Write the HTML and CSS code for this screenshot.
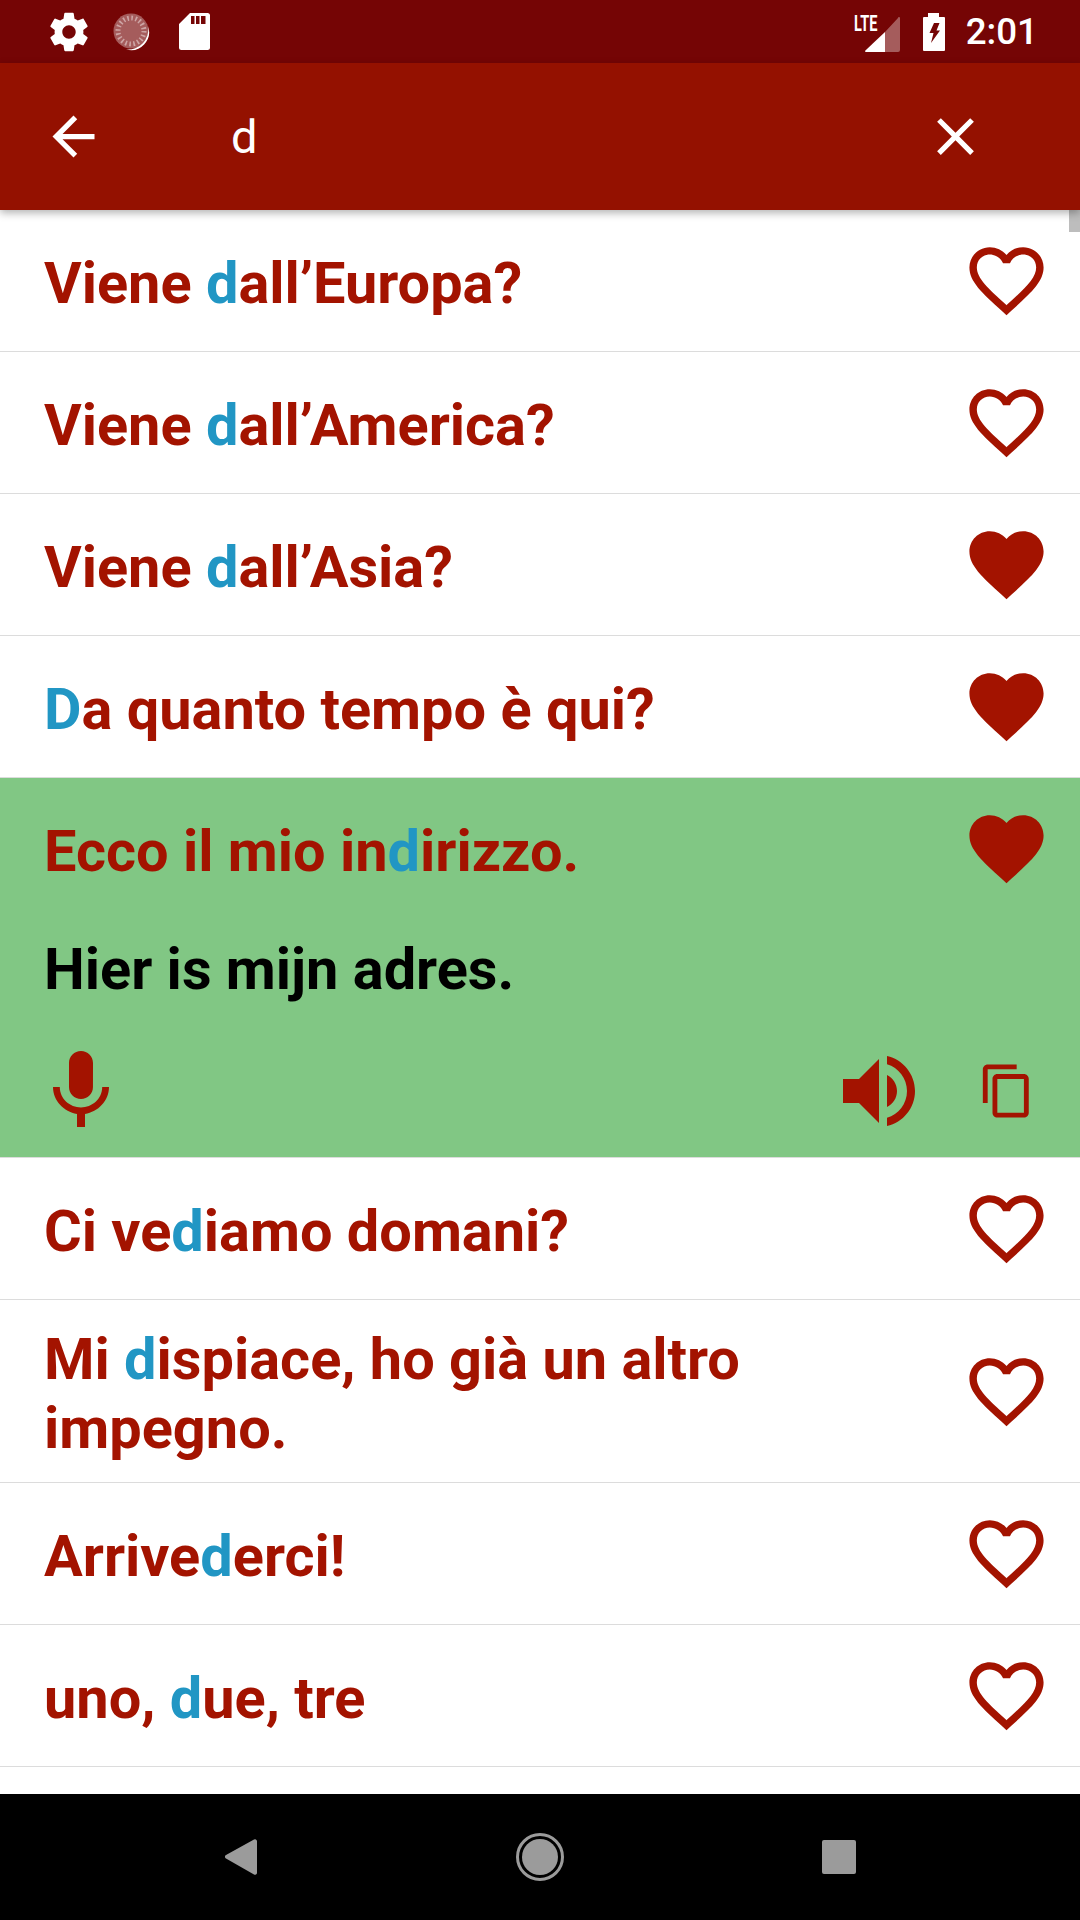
FILE: index.html
```html
<!DOCTYPE html>
<html lang="it">
<head>
  <meta charset="UTF-8">
  <meta name="viewport" content="width=device-width, initial-scale=1.0">
  <title>Search phrases</title>
  <link rel="stylesheet" href="styles.css">
</head>
<body>
  <!-- Shared icons -->
  <svg class="defs" width="0" height="0">
    <symbol id="heart-line" viewBox="0 0 24 24"><path d="M16.5 3c-1.74 0-3.41.81-4.5 2.09C10.91 3.81 9.24 3 7.5 3 4.42 3 2 5.42 2 8.5c0 3.78 3.4 6.86 8.55 11.54L12 21.35l1.45-1.32C18.6 15.36 22 12.28 22 8.5 22 5.42 19.58 3 16.5 3zm-4.4 15.55l-.1.1-.1-.1C7.14 14.24 4 11.39 4 8.5 4 6.5 5.5 5 7.5 5c1.54 0 3.04.99 3.57 2.36h1.87C13.46 5.99 14.96 5 16.5 5c2 0 3.5 1.5 3.5 3.5 0 2.89-3.14 5.74-7.9 10.05z"/></symbol>
    <symbol id="heart-full" viewBox="0 0 24 24"><path d="M12 21.35l-1.45-1.32C5.4 15.36 2 12.28 2 8.5 2 5.42 4.42 3 7.5 3c1.74 0 3.41.81 4.5 2.09C13.09 3.81 14.76 3 16.5 3 19.58 3 22 5.42 22 8.5c0 3.78-3.4 6.86-8.55 11.54L12 21.35z"/></symbol>
  </svg>

  <div class="screen">
    <div class="status-bar">
      <div class="status-left">
        <svg class="ic-gear" viewBox="0 0 24 24"><path d="M19.43 12.98c.04-.32.07-.64.07-.98s-.03-.66-.07-.98l2.11-1.65c.19-.15.24-.42.12-.64l-2-3.46c-.12-.22-.39-.3-.61-.22l-2.49 1c-.52-.4-1.08-.73-1.69-.98l-.38-2.65C14.46 2.18 14.25 2 14 2h-4c-.25 0-.46.18-.49.42l-.38 2.65c-.61.25-1.17.59-1.69.98l-2.49-1c-.23-.09-.49 0-.61.22l-2 3.46c-.13.22-.07.49.12.64l2.11 1.65c-.04.32-.07.65-.07.98s.03.66.07.98l-2.11 1.65c-.19.15-.24.42-.12.64l2 3.46c.12.22.39.3.61.22l2.49-1c.52.4 1.08.73 1.69.98l.38 2.65c.03.24.24.42.49.42h4c.25 0 .46-.18.49-.42l.38-2.65c.61-.25 1.17-.59 1.69-.98l2.49 1c.23.09.49 0 .61-.22l2-3.46c.12-.22.07-.49-.12-.64l-2.11-1.65zM12 15.5c-1.93 0-3.5-1.57-3.5-3.5s1.57-3.5 3.5-3.5 3.5 1.57 3.5 3.5-1.57 3.5-3.5 3.5z"/></svg>
        <svg class="ic-dial" viewBox="0 0 38 38">
          <circle cx="18" cy="18" r="17.500" fill="#fff" fill-opacity=".35"/>
          <path d="M35 13A18 18 0 0 1 13 36.300A20 20 0 0 0 35 13z"/>
          <circle cx="18" cy="18" r="13" fill="none" stroke="#fff" stroke-opacity=".45" stroke-width="5" stroke-dasharray="1.600 2.480"/>
        </svg>
        <svg class="ic-sd" viewBox="0 0 31 37"><path fill-rule="evenodd" d="M11 0h17.500a2.500 2.500 0 0 1 2.500 2.500v32a2.500 2.500 0 0 1-2.500 2.500h-26a2.500 2.500 0 0 1-2.500-2.500v-23.500zM12 3v8h3.500v-8zM17 3v8h3.500v-8zM22 3v8h4.500v-8z"/></svg>
      </div>
      <div class="status-right">
        <div class="signal">
          <span class="lte">LTE</span>
          <svg class="ic-signal" viewBox="0 0 35 35">
            <path fill-opacity=".35" d="M20 15l13-14a1 1 0 0 1 2 0v32a2 2 0 0 1-2 2h-13z"/>
            <path d="M20 15v20h-19c-1 0-1.300-.7-.6-1.400z"/>
          </svg>
        </div>
        <svg class="ic-battery" viewBox="0 0 22 38"><path fill-rule="evenodd" d="M5 0h11v4h5a1 1 0 0 1 1 1v32a1 1 0 0 1-1 1h-20a1 1 0 0 1-1-1v-32a1 1 0 0 1 1-1h4zM11 10l-4.500 10h4l-2.500 10 9-12.500h-3.500l3-7.500z"/></svg>
        <span class="clock">2:01</span>
      </div>
    </div>

    <header class="app-bar">
      <svg class="ic-bar" viewBox="0 0 24 24"><path d="M20 11H7.830l5.590-5.590L12 4l-8 8 8 8 1.410-1.410L7.830 13H20v-2z"/></svg>
      <span class="query">d</span>
      <svg class="ic-bar" viewBox="0 0 24 24"><path d="M19 6.410L17.590 5 12 10.590 6.410 5 5 6.410 10.590 12 5 17.590 6.410 19 12 13.410 17.590 19 19 17.590 13.410 12z"/></svg>
    </header>

    <main class="list">
      <div class="scroll-thumb"></div>

      <div class="row">
        <p class="phrase">Viene <span class="hl">d</span>all’Europa?</p>
        <svg class="ic-heart"><use href="#heart-line"/></svg>
      </div>
      <div class="row">
        <p class="phrase">Viene <span class="hl">d</span>all’America?</p>
        <svg class="ic-heart"><use href="#heart-line"/></svg>
      </div>
      <div class="row">
        <p class="phrase">Viene <span class="hl">d</span>all’Asia?</p>
        <svg class="ic-heart"><use href="#heart-full"/></svg>
      </div>
      <div class="row">
        <p class="phrase"><span class="hl">D</span>a quanto tempo è qui?</p>
        <svg class="ic-heart"><use href="#heart-full"/></svg>
      </div>

      <!-- Expanded phrase -->
      <div class="open">
        <div class="open-top">
          <p class="phrase">Ecco il mio in<span class="hl">d</span>irizzo.</p>
          <svg class="ic-heart"><use href="#heart-full"/></svg>
        </div>
        <p class="translation">Hier is mijn adres.</p>
        <div class="actions">
          <svg class="ic-action" viewBox="0 0 24 24"><path d="M12 14c1.660 0 2.990-1.340 2.990-3L15 5c0-1.660-1.340-3-3-3S9 3.340 9 5v6c0 1.660 1.340 3 3 3zm5.300-3c0 3-2.540 5.100-5.300 5.100S6.700 14 6.700 11H5c0 3.410 2.720 6.230 6 6.720V21h2v-3.280c3.280-.48 6-3.300 6-6.720h-1.700z"/></svg>
          <svg class="ic-action ic-speaker" viewBox="0 0 24 24"><path d="M3 9v6h4l5 5V4L7 9H3zm13.500 3c0-1.770-1.020-3.290-2.500-4.030v8.050c1.480-.73 2.500-2.250 2.500-4.020zM14 3.230v2.060c2.890.86 5 3.540 5 6.710s-2.110 5.850-5 6.710v2.060c4.010-.91 7-4.490 7-8.770s-2.990-7.860-7-8.770z"/></svg>
          <svg class="ic-copy" viewBox="0 0 24 24"><path d="M16 1H4c-1.100 0-2 .9-2 2v14h2V3h12V1zm3 4H8c-1.100 0-2 .9-2 2v14c0 1.100.9 2 2 2h11c1.100 0 2-.9 2-2V7c0-1.100-.9-2-2-2zm0 16H8V7h11v14z"/></svg>
        </div>
      </div>

      <div class="row">
        <p class="phrase">Ci ve<span class="hl">d</span>iamo domani?</p>
        <svg class="ic-heart"><use href="#heart-line"/></svg>
      </div>
      <div class="row row-tall">
        <p class="phrase">Mi <span class="hl">d</span>ispiace, ho già un altro impegno.</p>
        <svg class="ic-heart"><use href="#heart-line"/></svg>
      </div>
      <div class="row">
        <p class="phrase">Arrive<span class="hl">d</span>erci!</p>
        <svg class="ic-heart"><use href="#heart-line"/></svg>
      </div>
      <div class="row">
        <p class="phrase">uno, <span class="hl">d</span>ue, tre</p>
        <svg class="ic-heart"><use href="#heart-line"/></svg>
      </div>
    </main>

    <nav class="nav-bar">
      <svg class="ic-nav-back" viewBox="0 0 32 36"><path d="M29 .5a2 2 0 0 1 3 1.500v32a2 2 0 0 1-3 1.500l-28-16a2 2 0 0 1 0-3.500z"/></svg>
      <svg class="ic-nav-home" viewBox="0 0 48 48">
        <circle cx="24" cy="24" r="22.500" fill="none" stroke="#9b9b9b" stroke-width="3"/>
        <circle cx="24" cy="24" r="18"/>
      </svg>
      <div class="nav-recent"></div>
    </nav>
  </div>
</body>
</html>
```

FILE: styles.css
```css
* {
  box-sizing: border-box;
}
body {
  margin: 0;
  font-family: Roboto, Arial, sans-serif;
  background: #fff;
}
p {
  margin: 0;
}
svg {
  display: block;
  flex: none;
}
.defs {
  position: absolute;
}
.screen {
  width: 1080px;
  height: 1920px;
  display: flex;
  flex-direction: column;
  overflow: hidden;
}

/* Status bar */
.status-bar {
  height: 63px;
  flex: none;
  display: flex;
  justify-content: space-between;
  align-items: center;
  background-color: #750505;
  color: #fff;
  fill: #fff;
  padding: 0 42px 0 46px;
}
.status-left {
  display: flex;
  align-items: center;
}
.status-right {
  display: flex;
  align-items: center;
}
.ic-gear {
  width: 46px;
  height: 46px;
}
.ic-dial {
  width: 38px;
  height: 38px;
  margin-left: 21px;
}
.ic-sd {
  width: 31px;
  height: 37px;
  margin-left: 28px;
}
.signal {
  position: relative;
  width: 46px;
  height: 38px;
  margin-top: 2px;
}
.lte {
  position: absolute;
  left: 0;
  top: -1px;
  font-size: 22px;
  line-height: 22px;
  font-weight: 700;
  transform: scaleX(.66);
  transform-origin: left center;
}
.ic-signal {
  position: absolute;
  right: 0;
  bottom: 0;
  width: 35px;
  height: 35px;
}
.ic-battery {
  width: 22px;
  height: 38px;
  margin-left: 23px;
}
.clock {
  font-size: 36.750px;
  font-weight: 500;
  margin-left: 21px;
}

/* App bar */
.app-bar {
  height: 147px;
  flex: none;
  display: flex;
  align-items: center;
  background-color: #941100;
  color: #fff;
  fill: #fff;
  padding: 0 93px 0 42px;
  box-shadow: 0 3px 8px rgba(0, 0, 0, 0.3);
  position: relative;
  z-index: 2;
}
.ic-bar {
  width: 63px;
  height: 63px;
}
.query {
  flex: 1;
  font-size: 47px;
  margin-left: 126px;
}

/* Phrase list */
.list {
  flex: 1;
  position: relative;
  background: #fff;
}
.scroll-thumb {
  position: absolute;
  top: 0;
  right: 0;
  width: 11px;
  height: 22px;
  background-color: #bdbdbd;
}
.row {
  min-height: 142px;
  display: flex;
  align-items: center;
  padding: 0 29px 0 44px;
  border-bottom: 1px solid #dcdcdc;
}
.row-tall {
  min-height: 183px;
}
.phrase {
  flex: 1;
  font-size: 57.700px;
  line-height: 68.500px;
  font-weight: 700;
  color: #a31300;
  padding: 5px 100px 0 0;
}
.hl {
  color: #2196c4;
}
.ic-heart {
  width: 89px;
  height: 89px;
  fill: #a31300;
}
.open {
  height: 380px;
  background-color: #81c784;
  padding: 0 29px 0 44px;
  border-bottom: 1px solid #dcdcdc;
}
.open-top {
  height: 141px;
  display: flex;
  align-items: center;
}
.translation {
  margin-top: 16px;
  font-size: 57.700px;
  line-height: 69px;
  font-weight: 700;
  color: #000;
}
.actions {
  margin-top: 39px;
  display: flex;
  align-items: center;
  fill: #a31300;
}
.ic-action {
  width: 96px;
  height: 96px;
  margin-left: -11px;
}
.ic-speaker {
  margin-left: auto;
}
.ic-copy {
  width: 58px;
  height: 58px;
  margin-left: 51px;
  margin-right: 15px;
}

/* Navigation bar */
.nav-bar {
  height: 126px;
  flex: none;
  display: grid;
  grid-template-columns: 299px 299px 299px;
  justify-content: center;
  justify-items: center;
  align-items: center;
  background-color: #000;
  fill: #9b9b9b;
}
.ic-nav-back {
  width: 32px;
  height: 36px;
}
.ic-nav-home {
  width: 48px;
  height: 48px;
}
.nav-recent {
  width: 34px;
  height: 34px;
  background-color: #9b9b9b;
  border-radius: 2px;
}
```
